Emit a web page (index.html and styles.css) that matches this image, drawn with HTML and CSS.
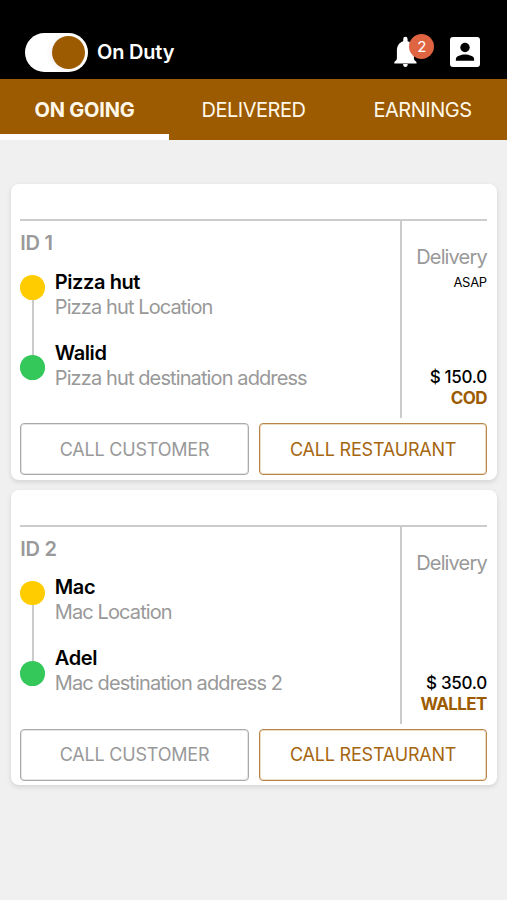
FILE: index.html
```html
<!DOCTYPE html>
<html lang="en">
<head>
    <meta charset="UTF-8">
    <meta name="viewport" content="width=device-width, initial-scale=1">
    <title>Orders</title>
    <link rel="stylesheet" href="styles.css">
</head>
<body>
    <header class="topbar">
        <div class="duty">
            <div class="switch"><div class="knob"></div></div>
            <span class="duty-label">On Duty</span>
        </div>
        <div class="actions">
            <div class="bell">
                <svg width="23" height="32" viewBox="0 0 23 32">
                    <path fill="#fff" d="M9.200 3.200a2.200 2.400 0 0 1 4.400 0v2.100c4.200 1.300 6.300 4.900 6.300 9.400v7.100c0 2.100.9 3.100 2.600 4.100v1.500H.3v-1.500c1.700-1 2.600-2 2.600-4.100v-7.100c0-4.500 2.100-8.100 6.300-9.400z"/>
                    <path fill="#fff" d="M9.100 28h4.600a2.300 3 0 0 1-4.600 0z"/>
                </svg>
                <span class="badge">2</span>
            </div>
            <svg class="profile" width="30" height="30" viewBox="0 0 30 30">
                <rect width="30" height="30" rx="3" fill="#fff"/>
                <circle cx="15" cy="10.500" r="4.700"/>
                <path d="M5.900 23.800v-1.500c0-3.200 5.200-4.700 9.100-4.700s9.100 1.500 9.100 4.700v1.500z"/>
            </svg>
        </div>
    </header>

    <nav class="tabs">
        <a class="tab active">ON GOING</a>
        <a class="tab">DELIVERED</a>
        <a class="tab">EARNINGS</a>
    </nav>

    <main class="orders">
        <section class="card">
            <div class="order">
                <div class="route">
                    <h2 class="order-id">ID 1</h2>
                    <div class="stops">
                        <div class="track">
                            <span class="dot pickup"></span>
                            <span class="line"></span>
                            <span class="dot dropoff"></span>
                        </div>
                        <div class="places">
                            <div class="place">
                                <p class="name">Pizza hut</p>
                                <p class="address">Pizza hut Location</p>
                            </div>
                            <div class="place">
                                <p class="name">Walid</p>
                                <p class="address">Pizza hut destination address</p>
                            </div>
                        </div>
                    </div>
                </div>
                <div class="summary">
                    <p class="type">Delivery</p>
                    <p class="time">ASAP</p>
                    <p class="price">$ 150.0</p>
                    <p class="payment">COD</p>
                </div>
            </div>
            <div class="buttons">
                <button class="btn customer">CALL CUSTOMER</button>
                <button class="btn restaurant">CALL RESTAURANT</button>
            </div>
        </section>

        <section class="card">
            <div class="order">
                <div class="route">
                    <h2 class="order-id">ID 2</h2>
                    <div class="stops">
                        <div class="track">
                            <span class="dot pickup"></span>
                            <span class="line"></span>
                            <span class="dot dropoff"></span>
                        </div>
                        <div class="places">
                            <div class="place">
                                <p class="name">Mac</p>
                                <p class="address">Mac Location</p>
                            </div>
                            <div class="place">
                                <p class="name">Adel</p>
                                <p class="address">Mac destination address 2</p>
                            </div>
                        </div>
                    </div>
                </div>
                <div class="summary">
                    <p class="type">Delivery</p>
                    <p class="price">$ 350.0</p>
                    <p class="payment">WALLET</p>
                </div>
            </div>
            <div class="buttons">
                <button class="btn customer">CALL CUSTOMER</button>
                <button class="btn restaurant">CALL RESTAURANT</button>
            </div>
        </section>
    </main>
</body>
</html>
```
FILE: styles.css
```css
* {
    box-sizing: border-box;
}

body {
    margin: 0;
    min-height: 100vh;
    background: #f0f0f0;
    font-family: Inter, "Liberation Sans", sans-serif;
    font-size: 20px;
    letter-spacing: -0.6px;
    color: #000;
}

p, h2 {
    margin: 0;
}

/* top bar */
.topbar {
    height: 79px;
    padding: 25px 27px 0 25px;
    background: #000;
    display: flex;
    justify-content: space-between;
    align-items: center;
}

.duty {
    display: flex;
    align-items: center;
    gap: 9px;
}

.switch {
    width: 63px;
    height: 39px;
    padding: 3px;
    border-radius: 20px;
    background: #fff;
    display: flex;
    justify-content: flex-end;
}

.knob {
    width: 33px;
    height: 33px;
    border-radius: 50%;
    background: #9c5b00;
    box-shadow: -2px 1px 6px rgba(0, 0, 0, 0.05);
}

.duty-label {
    color: #fff;
    font-weight: 600;
    letter-spacing: -0.2px;
}

.actions {
    display: flex;
    align-items: center;
    gap: 33px;
}

.bell {
    position: relative;
    height: 32px;
}

.badge {
    position: absolute;
    top: -2px;
    left: 15px;
    width: 25px;
    height: 25px;
    border-radius: 50%;
    background: #df6442;
    color: #fff;
    font-size: 15px;
    line-height: 25px;
    text-align: center;
}

.bell svg, .profile {
    display: block;
}

/* tabs */
.tabs {
    display: flex;
    height: 61px;
    background: #9c5b00;
}

.tab {
    flex: 1;
    padding-top: 8px;
    border-bottom: 6px solid transparent;
    color: #fff8ea;
    line-height: 47px;
    text-align: center;
    letter-spacing: -0.5px;
}

.tab.active {
    border-bottom-color: #fff;
    font-weight: 700;
    letter-spacing: -0.2px;
}

/* order cards */
.orders {
    padding: 44px 10px 0 10.6px;
    display: flex;
    flex-direction: column;
    gap: 10px;
}

.card {
    height: 295.6px;
    padding: 35px 9.6px 0;
    border-radius: 8px;
    background: #fff;
    box-shadow: 0 2px 5px rgba(0, 0, 0, 0.12);
}

.order {
    display: flex;
    height: 199px;
    border-top: 2px solid #ccc;
}

.route {
    flex: 1;
}

.order-id {
    padding-top: 10px;
    color: #999;
    font-size: 20px;
    font-weight: 600;
    line-height: 25px;
    letter-spacing: -0.2px;
}

.stops {
    display: flex;
    gap: 10px;
    padding-top: 13px;
}

.track {
    display: flex;
    flex-direction: column;
    align-items: center;
    padding-top: 6px;
    height: 111px;
}

.dot {
    width: 24.6px;
    height: 24.6px;
    border-radius: 50%;
}

.pickup {
    background: #ffcc00;
}

.dropoff {
    background: #34c759;
}

.line {
    flex: 1;
    width: 2px;
    margin-left: 0.8px;
    background: #ccc;
}

.places {
    display: flex;
    flex-direction: column;
    gap: 21px;
    padding-top: 0.6px;
}

.name {
    font-weight: 600;
    line-height: 25px;
    letter-spacing: -0.4px;
}

.address {
    color: #999;
    line-height: 25px;
    letter-spacing: -0.89px;
}

.summary {
    width: 87px;
    padding: 24px 0.6px 9px 0;
    border-left: 2px solid #ccc;
    display: flex;
    flex-direction: column;
    text-align: right;
}

.type {
    color: #999;
    line-height: 25px;
    letter-spacing: -0.85px;
}

.time {
    font-size: 13px;
    line-height: 24px;
    letter-spacing: -0.3px;
}

.price {
    margin-top: auto;
    font-size: 17px;
    font-weight: 500;
    line-height: 21px;
    letter-spacing: -0.3px;
}

.payment {
    color: #9c5b00;
    font-size: 17px;
    font-weight: 700;
    line-height: 21px;
    letter-spacing: -0.6px;
}

.buttons {
    display: flex;
    gap: 10px;
    padding-top: 5px;
}

.btn {
    flex: 1;
    height: 52px;
    padding: 0;
    border: 1px solid;
    border-radius: 4px;
    background: #fff;
    font-family: inherit;
    font-size: 18px;
    letter-spacing: -0.2px;
}

.customer {
    border-color: #aaa;
    box-shadow: inset 0 0 0 1px #e4e4e4;
    color: #999;
}

.restaurant {
    border-color: #b88547;
    box-shadow: inset 0 0 0 1px #ecdcc8;
    color: #a5660f;
}
```
